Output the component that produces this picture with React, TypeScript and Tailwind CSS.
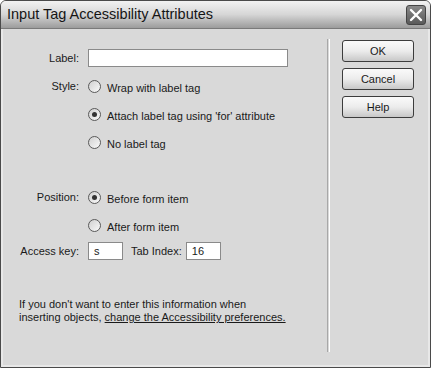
import React from 'react';

function Radio({ checked }: { checked?: boolean }) {
  return (
    <span className="relative inline-block w-[13px] h-[13px] rounded-full border border-[#5a5a5a] bg-gradient-to-br from-[#d0d0d0] to-[#fafafa] shrink-0">
      {checked && <span className="absolute left-[3px] top-[3px] w-[5px] h-[5px] rounded-full bg-[#333]" />}
    </span>
  );
}

function Option({ checked, children }: { checked?: boolean; children: React.ReactNode }) {
  return (
    <div className="h-[28px] flex items-center gap-[6px]">
      <Radio checked={checked} />
      <span className="mt-[5px]">{children}</span>
    </div>
  );
}

function Btn({ children }: { children: React.ReactNode }) {
  return (
    <div className="w-[72px] h-[22px] rounded-[3px] border border-[#3c3c3c] bg-gradient-to-b from-[#fafafa] via-[#ececec] to-[#c8c8c8] flex items-center justify-center text-[#1a1a1a]">
      {children}
    </div>
  );
}

export default function App() {
  const font = { fontFamily: 'Tahoma, "Liberation Sans", Arial, sans-serif' };
  return (
    <div className="w-[431px] h-[368px] bg-white">
      <div className="w-[431px] h-[368px] rounded-t-[6px] border border-[#4a4a4a] bg-[#d9d9d9] flex flex-col overflow-hidden text-[11px] text-[#1a1a1a]" style={font}>
        {/* Title bar */}
        <div className="h-[28px] shrink-0 flex items-center justify-between pl-[6px] pr-[4px] bg-gradient-to-b from-[#f2f2f2] via-[#d6d6d6] to-[#9c9c9c] border-b border-[#7a7a7a]">
          <span className="text-[14.5px] text-[#151515]">Input Tag Accessibility Attributes</span>
          <div className="w-[20px] h-[20px] rounded-[3px] bg-gradient-to-b from-[#8a8a8a] to-[#5a5a5a] border border-[#444] flex items-center justify-center">
            <svg width="14" height="14" viewBox="0 0 14 14">
              <path d="M2 2 L12 12 M12 2 L2 12" stroke="#fff" strokeWidth="2.4" strokeLinecap="round" />
            </svg>
          </div>
        </div>

        {/* Body */}
        <div className="flex-1 flex border-x-2 border-b-2 border-[#e8e8e8]">
          <div className="w-[323px] pt-[20px]">
            <div className="grid grid-cols-[76px_1fr] gap-x-[9px] items-center">
              <span className="text-right">Label:</span>
              <div className="w-[200px] h-[18px] bg-white border border-[#8a8a8a]" />
            </div>

            <div className="grid grid-cols-[76px_1fr] gap-x-[9px] mt-[5px]">
              <span className="text-right h-[28px] flex items-center justify-end pt-[1px]">Style:</span>
              <div className="flex flex-col">
                <Option>Wrap with label tag</Option>
                <Option checked>Attach label tag using 'for' attribute</Option>
                <Option>No label tag</Option>
              </div>
            </div>

            <div className="grid grid-cols-[76px_1fr] gap-x-[9px] mt-[27px]">
              <span className="text-right h-[28px] flex items-center justify-end pt-[1px]">Position:</span>
              <div className="flex flex-col">
                <Option checked>Before form item</Option>
                <Option>After form item</Option>
              </div>
            </div>

            <div className="grid grid-cols-[76px_1fr] gap-x-[9px] items-center mt-[3px]">
              <span className="text-right">Access key:</span>
              <div className="flex items-center">
                <div className="w-[35px] h-[18px] bg-white border border-[#8a8a8a] pl-[5px] leading-[16px]">s</div>
                <span className="ml-[8px]">Tab Index:</span>
                <div className="ml-[4px] w-[35px] h-[18px] bg-white border border-[#8a8a8a] pl-[5px] leading-[16px]">16</div>
              </div>
            </div>

            <p className="ml-[16px] mt-[38px] leading-[13px]">
              If you don't want to enter this information when<br />
              inserting objects, <span className="underline">change the Accessibility preferences.</span>
            </p>
          </div>

          <div className="mt-[10px] mb-[13px] ml-[1px] w-[3px] border-l border-[#a8a8a8] border-r border-r-white" />

          <div className="flex flex-col gap-[6px] pt-[11px] pl-[12px]">
            <Btn>OK</Btn>
            <Btn>Cancel</Btn>
            <Btn>Help</Btn>
          </div>
        </div>
      </div>
    </div>
  );
}
